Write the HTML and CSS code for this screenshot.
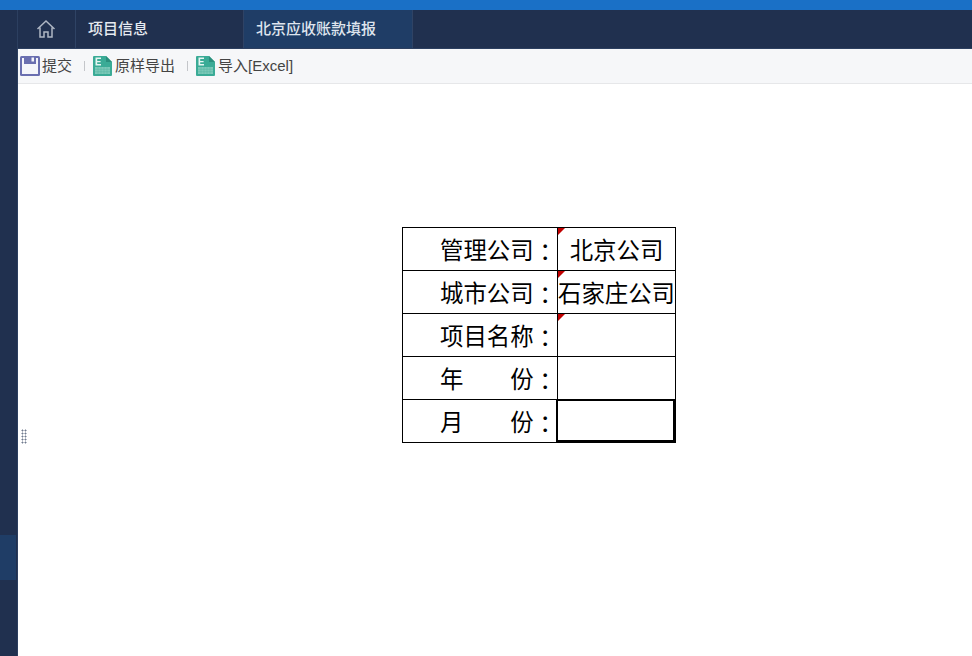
FILE: index.html
```html
<!DOCTYPE html>
<html lang="zh-CN">
<head>
<meta charset="utf-8">
<title>北京应收账款填报</title>
<link rel="stylesheet" href="styles.css">
</head>
<body>
<div class="topbar"></div>
<div class="shell">
  <aside class="sidebar"><div class="side-active"></div></aside>
  <main class="main">
    <nav class="tabs">
      <div class="tab tab-home">
        <svg class="home" width="20" height="20" viewBox="0 0 20 20" fill="none" stroke="#aeb6c4" stroke-width="1.5"><path d="M1.500 10 10 2l8.500 8M4 8.500V18h4v-5h4v5h4V8.500"/></svg>
      </div>
      <div class="tab tab-text">项目信息</div>
      <div class="tab tab-text tab-active">北京应收账款填报</div>
    </nav>
    <div class="toolbar">
      <div class="tool tool-first">
        <svg width="20" height="20" viewBox="0 0 20 20"><rect x="0" y="0" width="20" height="20" rx="1.500" fill="#6a6fb0"/><rect x="2" y="2" width="16" height="16" fill="#f4f5fa"/><rect x="4" y="0" width="12" height="8" fill="#6a6fb0"/><rect x="11.500" y="1.500" width="2.500" height="4" fill="#f4f5fa"/></svg>
        <span>提交</span>
      </div>
      <i class="sep"></i>
      <div class="tool">
        <svg width="19" height="20" viewBox="0 0 19 20"><path d="M1 0h12l6 6v13a1 1 0 0 1-1 1H1a1 1 0 0 1-1-1V1a1 1 0 0 1 1-1z" fill="#3aab96"/><path d="M13 0l6 6h-6z" fill="#2a8f7d"/><path d="M2.500 1.500H8v1.400H4.200v2H7.600v1.300H4.200v1.900H8v1.400H2.500z" fill="#e6f6f2"/><path d="M2 11h15v7H2z" fill="#7cc9b9"/><path d="M2 13.300h15M2 15.700h15M5 11v7M8 11v7M11 11v7M14 11v7" stroke="#5cb9a6" stroke-width=".6"/></svg>
        <span>原样导出</span>
      </div>
      <i class="sep"></i>
      <div class="tool">
        <svg width="19" height="20" viewBox="0 0 19 20"><path d="M1 0h12l6 6v13a1 1 0 0 1-1 1H1a1 1 0 0 1-1-1V1a1 1 0 0 1 1-1z" fill="#3aab96"/><path d="M13 0l6 6h-6z" fill="#2a8f7d"/><path d="M2.500 1.500H8v1.400H4.200v2H7.600v1.300H4.200v1.900H8v1.400H2.500z" fill="#e6f6f2"/><path d="M2 11h15v7H2z" fill="#7cc9b9"/><path d="M2 13.300h15M2 15.700h15M5 11v7M8 11v7M11 11v7M14 11v7" stroke="#5cb9a6" stroke-width=".6"/></svg>
        <span>导入[Excel]</span>
      </div>
    </div>
    <section class="sheet">
      <div class="grip"></div>
      <table class="form">
        <tr><td class="lbl">管理公司<span class="colon" lang="zh-Hant">：</span></td><td class="val mark">北京公司</td></tr>
        <tr><td class="lbl">城市公司<span class="colon" lang="zh-Hant">：</span></td><td class="val mark">石家庄公司</td></tr>
        <tr><td class="lbl">项目名称<span class="colon" lang="zh-Hant">：</span></td><td class="val mark"></td></tr>
        <tr><td class="lbl">年　　份<span class="colon" lang="zh-Hant">：</span></td><td class="val"></td></tr>
        <tr><td class="lbl">月　　份<span class="colon" lang="zh-Hant">：</span></td><td class="val selected"></td></tr>
      </table>
    </section>
  </main>
</div>
</body>
</html>
```
FILE: styles.css
```css
* { box-sizing: border-box; }
html, body { margin: 0; height: 100%; overflow: hidden; }
body {
  width: 972px;
  height: 656px;
  display: flex;
  flex-direction: column;
  background: #fff;
  font-family: "Liberation Sans", "Noto Sans CJK SC", sans-serif;
}
.topbar { height: 10px; flex: none; background: #1a70c6; }
.shell { flex: 1; display: flex; min-height: 0; }
.sidebar {
  width: 18px;
  flex: none;
  background: #20304f;
  border-right: 1px solid #2c3f60;
  padding-top: 525px;
}
.side-active { height: 45px; width: 16px; background: #1f3d66; }
.main { flex: 1; display: flex; flex-direction: column; min-width: 0; }
.tabs {
  height: 39px;
  flex: none;
  display: flex;
  background: #20304f;
  border-bottom: 1px solid #2c3f60;
}
.tab { display: flex; align-items: center; border-right: 1px solid #2f4365; }
.tab-home { width: 58px; padding: 0 0 0 18px; }
.tab-text {
  width: 168px;
  padding: 0 0 4px 12px;
  color: #e6eaf0;
  font-size: 15px;
  font-weight: 500;
}
.tab-active { width: 169px; background: #1f3d66; color: #dfe5ee; }
.toolbar {
  height: 35px;
  flex: none;
  display: flex;
  align-items: center;
  background: #f6f7f9;
  border-bottom: 1px solid #e6e7e9;
  font-size: 15px;
  color: #444;
}
.tool { display: flex; align-items: center; gap: 3px; }
.tool span { margin-top: -4px; }
.tool-first { padding-left: 2px; gap: 2px; }
.sep { width: 1px; height: 10px; background: #c4c6ca; margin: 0 8px 0 12px; }
.sheet { flex: 1; position: relative; padding: 143px 0 0 384px; }
.grip {
  position: absolute;
  left: 3px;
  top: 345px;
  width: 6px;
  height: 15px;
  background-image: radial-gradient(#6f7a8e 0.9px, transparent 1.1px);
  background-size: 3px 3px;
}
.form {
  border-collapse: collapse;
  table-layout: fixed;
  width: 274px;
  color: #000;
  font-size: 23.400px;
}
.form td {
  height: 43px;
  padding: 6px 0 0;
  border: 1px solid #000;
  white-space: nowrap;
  line-height: 1;
}
.lbl { width: 155px; text-align: right; }
.val { width: 118px; text-align: center; position: relative; }
.colon { font-family: "Noto Sans CJK TC", sans-serif; vertical-align: -2px; }
.mark::before {
  content: "";
  position: absolute;
  left: 0;
  top: 0;
  border-style: solid;
  border-width: 7px 7px 0 0;
  border-color: #c00000 transparent transparent transparent;
}
.selected::after {
  content: "";
  position: absolute;
  left: -2px;
  top: -1px;
  right: 0;
  bottom: 0;
  border: 2px solid #000;
}
```
